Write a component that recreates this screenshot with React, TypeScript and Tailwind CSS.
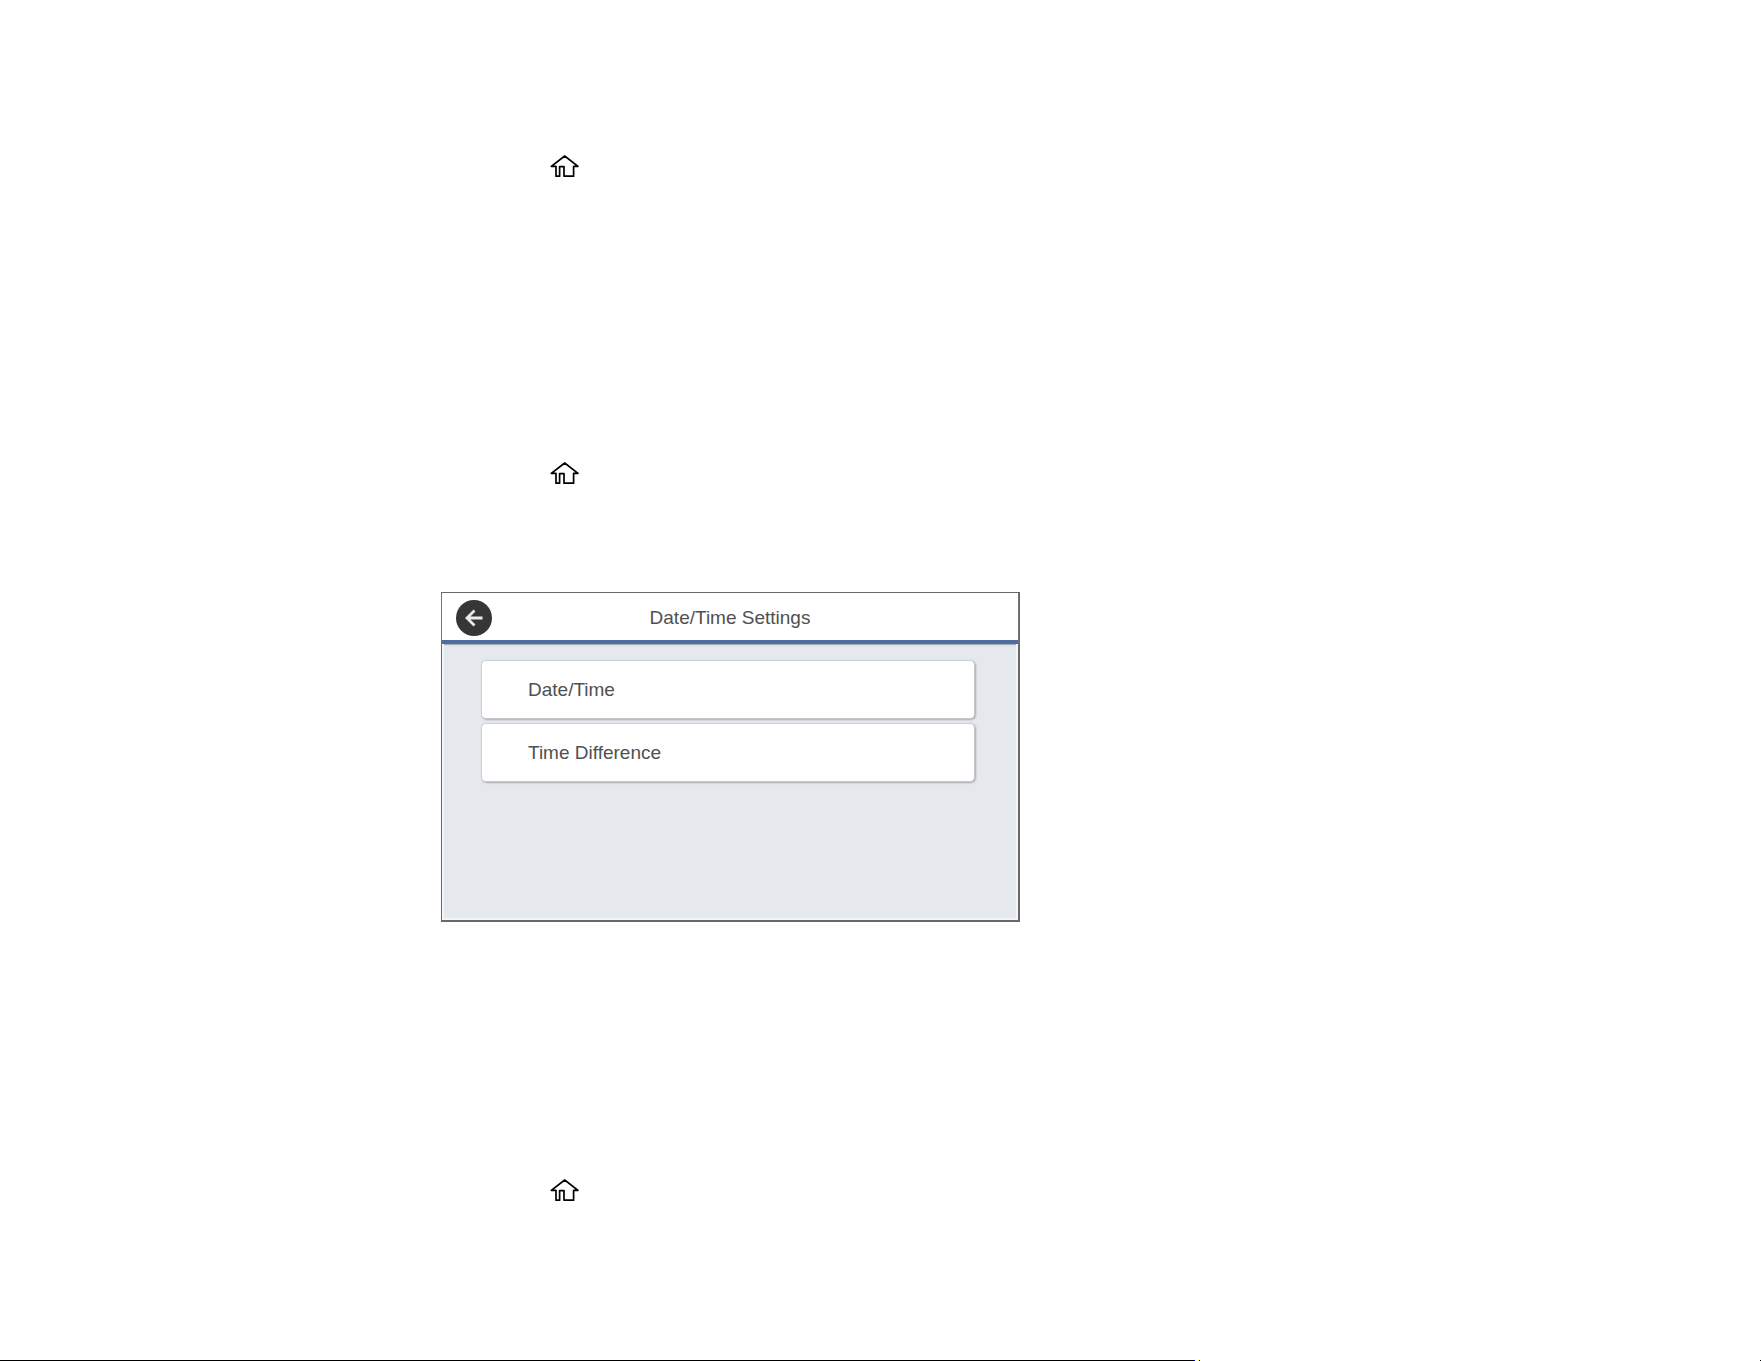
import React from "react";

function HomeIcon() {
  return (
    <svg
      role="img"
      aria-label="Home"
      width="30"
      height="24"
      viewBox="0 0 30 24"
      fill="none"
      stroke="#000"
      strokeWidth="1.7"
      strokeLinejoin="round"
      className="ml-[109px] block shrink-0"
    >
      <path d="M1.3 12.3 L14.7 2 L28 12.3 H23.6 V22.2 H14 V12.6 H9.6 V22.2 H6 V12.3 Z" />
    </svg>
  );
}

function BackButton() {
  return (
    <button
      type="button"
      aria-label="Back"
      className="flex size-9 items-center justify-center rounded-full bg-[#363636]"
    >
      <svg width="20" height="20" viewBox="0 0 20 20" fill="none" stroke="#ececec" strokeWidth="2.8">
        <path d="M18.5 10 H3 M10.5 2.5 L3 10 L10.5 17.5" />
      </svg>
    </button>
  );
}

function MenuItem({ label }: { label: string }) {
  return (
    <button
      type="button"
      className="h-[59px] w-full rounded-[5px] border border-[#ccd1d7] border-r-[#c4c8cd] border-b-[#c4c8cd] bg-white pl-[46px] text-left shadow-[1px_1px_2px_#a9adb3]"
    >
      {label}
    </button>
  );
}

export default function App() {
  return (
    <main className="flex min-h-screen flex-col bg-white pt-[154px] pl-[441px] font-['Liberation_Sans',Arial,sans-serif] text-[19px] leading-6 text-[#505050]">
      <HomeIcon />
      <div className="mt-[283px]">
        <HomeIcon />
      </div>

      <section className="mt-[107px] flex min-h-[330px] w-full max-w-[579px] flex-col border border-r-2 border-b-2 border-[#67696c] bg-[#e5e8ed]">
        <header className="grid grid-cols-[36px_1fr_36px] items-center border-b-4 border-[#4f6c9f] bg-white px-[14px] pt-[7px] pb-[4px] shadow-[0_1px_1px_#a9acb1]">
          <BackButton />
          <h1 className="text-center">Date/Time Settings</h1>
        </header>
        <div className="flex grow flex-col gap-1 border-2 border-t-0 border-[#f3f5f7] pt-[16px] pr-[41px] pl-[37px]">
          <MenuItem label="Date/Time" />
          <MenuItem label="Time Difference" />
        </div>
      </section>

      <div className="mt-[256px]">
        <HomeIcon />
      </div>

      <footer className="mt-auto -ml-[441px] flex h-px">
        <div className="w-[1194px] bg-black" />
        <div className="w-px bg-[#0000ff]" />
        <div className="ml-[3px] w-px bg-[#ffff00]" />
        <div className="w-px bg-black" />
        <div className="ml-auto w-px bg-black" />
      </footer>
    </main>
  );
}
